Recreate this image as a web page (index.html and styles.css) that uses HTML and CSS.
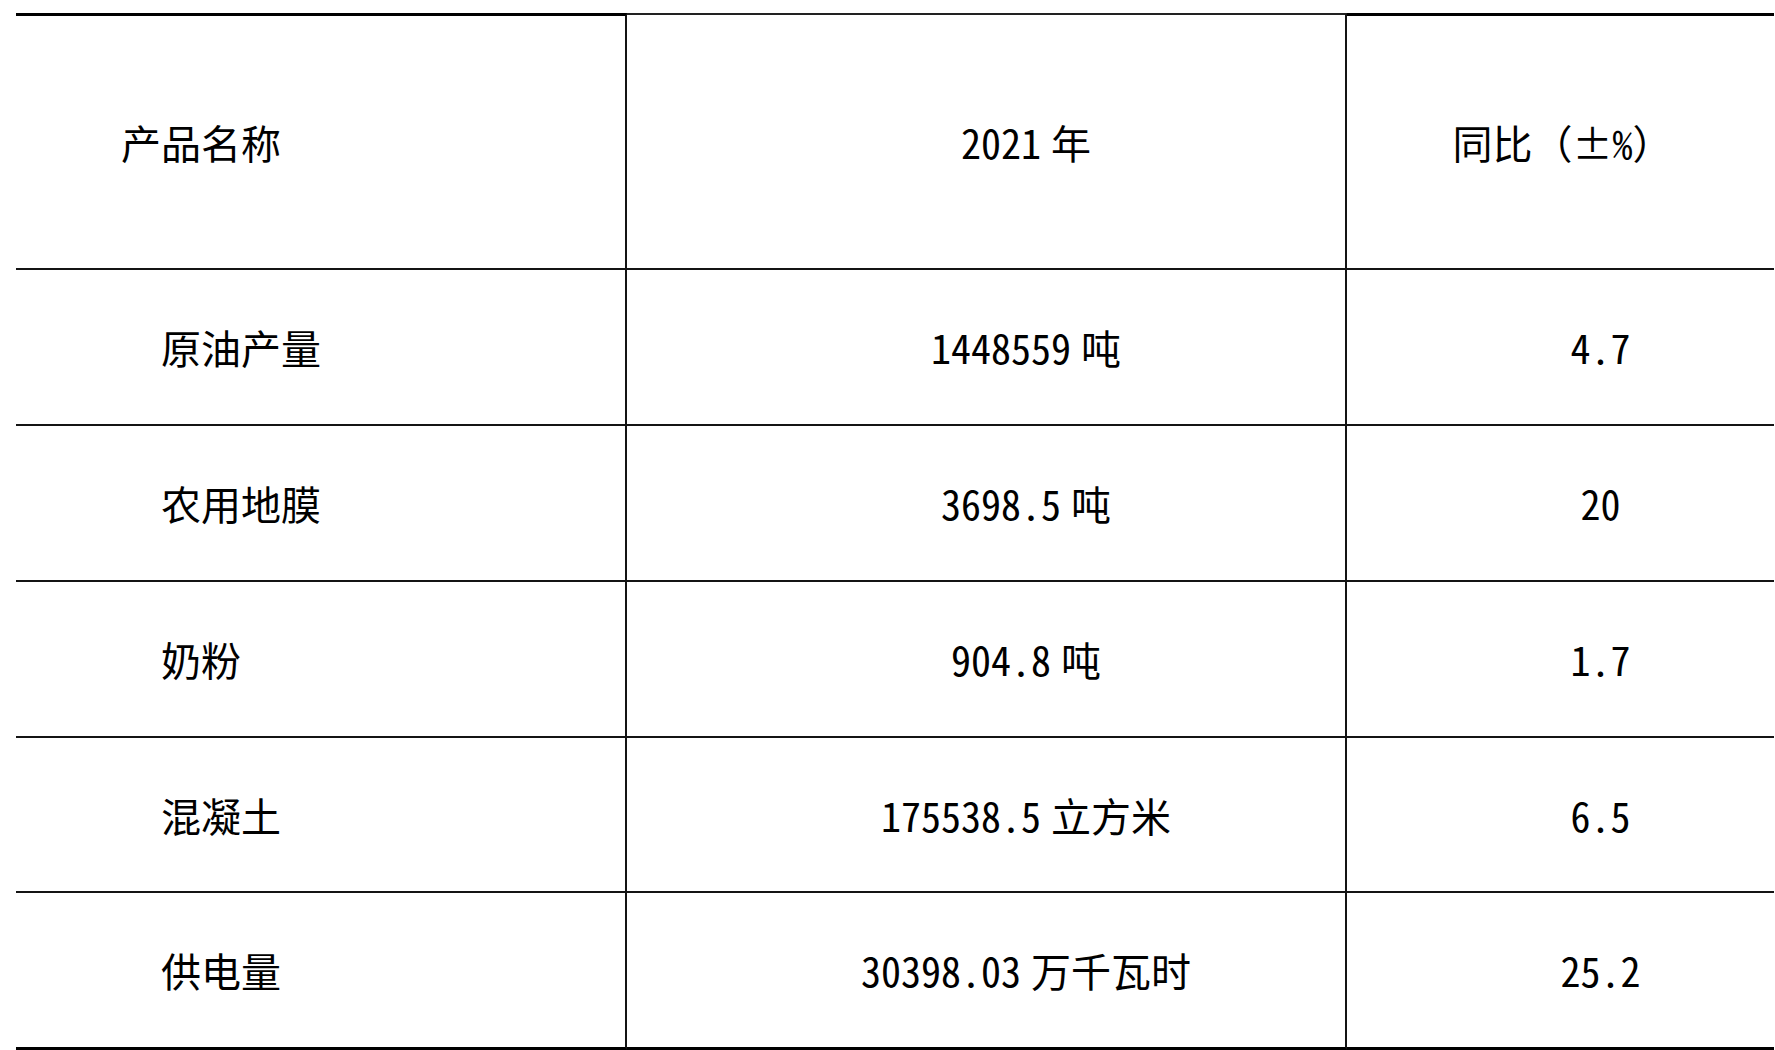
FILE: index.html
```html
<!DOCTYPE html>
<html lang="zh-CN">
<head>
<meta charset="utf-8">
<title>产品产量</title>
<link rel="stylesheet" href="styles.css">
</head>
<body>
<div class="tbl">
  <div class="cell head c1 thick-top">产品名称</div>
  <div class="cell head c2 thin-top"><span class="hw">2021</span><span class="u">年</span></div>
  <div class="cell head c3 thick-top">同比（<span class="hw">±%</span>）</div>

  <div class="cell c1 body">原油产量</div>
  <div class="cell c2"><span class="hw">1448559</span><span class="u">吨</span></div>
  <div class="cell c3 hw">4.7</div>

  <div class="cell c1 body">农用地膜</div>
  <div class="cell c2"><span class="hw">3698.5</span><span class="u">吨</span></div>
  <div class="cell c3 hw">20</div>

  <div class="cell c1 body">奶粉</div>
  <div class="cell c2"><span class="hw">904.8</span><span class="u">吨</span></div>
  <div class="cell c3 hw">1.7</div>

  <div class="cell c1 body">混凝土</div>
  <div class="cell c2"><span class="hw">175538.5</span><span class="u">立方米</span></div>
  <div class="cell c3 hw">6.5</div>

  <div class="cell c1 body last">供电量</div>
  <div class="cell c2 last"><span class="hw">30398.03</span><span class="u">万千瓦时</span></div>
  <div class="cell c3 last hw">25.2</div>
</div>
</body>
</html>
```

FILE: styles.css
```css
html, body {
  margin: 0;
  padding: 0;
  background: #ffffff;
}

body {
  font-family: "Noto Sans CJK SC", "Noto Sans", sans-serif;
  font-size: 40px;
  color: #000;
}

.hw {
  font-feature-settings: "hwid";
}

.tbl {
  margin: 13px 0 0 16px;
  width: 1758px;
  display: grid;
  grid-template-columns: 611px 720px 427px;
  grid-template-rows: 257px 156px 156px 156px 155px 157px;
}

.cell {
  box-sizing: border-box;
  display: flex;
  align-items: center;
  border-bottom: 2px solid #141414;
  line-height: 1;
  white-space: nowrap;
}

.c1, .c2 {
  border-right: 2px solid #141414;
}

.c1 {
  justify-content: flex-start;
  padding-left: 105px;
}

.c1.body {
  padding-left: 145px;
}

.c2 {
  justify-content: center;
  padding-left: 80px;
}

.c3 {
  justify-content: center;
  padding-left: 80px;
}

.head.c3 {
  padding-left: 4px;
}

.thick-top {
  border-top: 3px solid #000;
}

.thin-top {
  border-top: 2px solid #222;
}

.last {
  border-bottom: 3px solid #000;
}

.u {
  margin-left: 10px;
}
```
